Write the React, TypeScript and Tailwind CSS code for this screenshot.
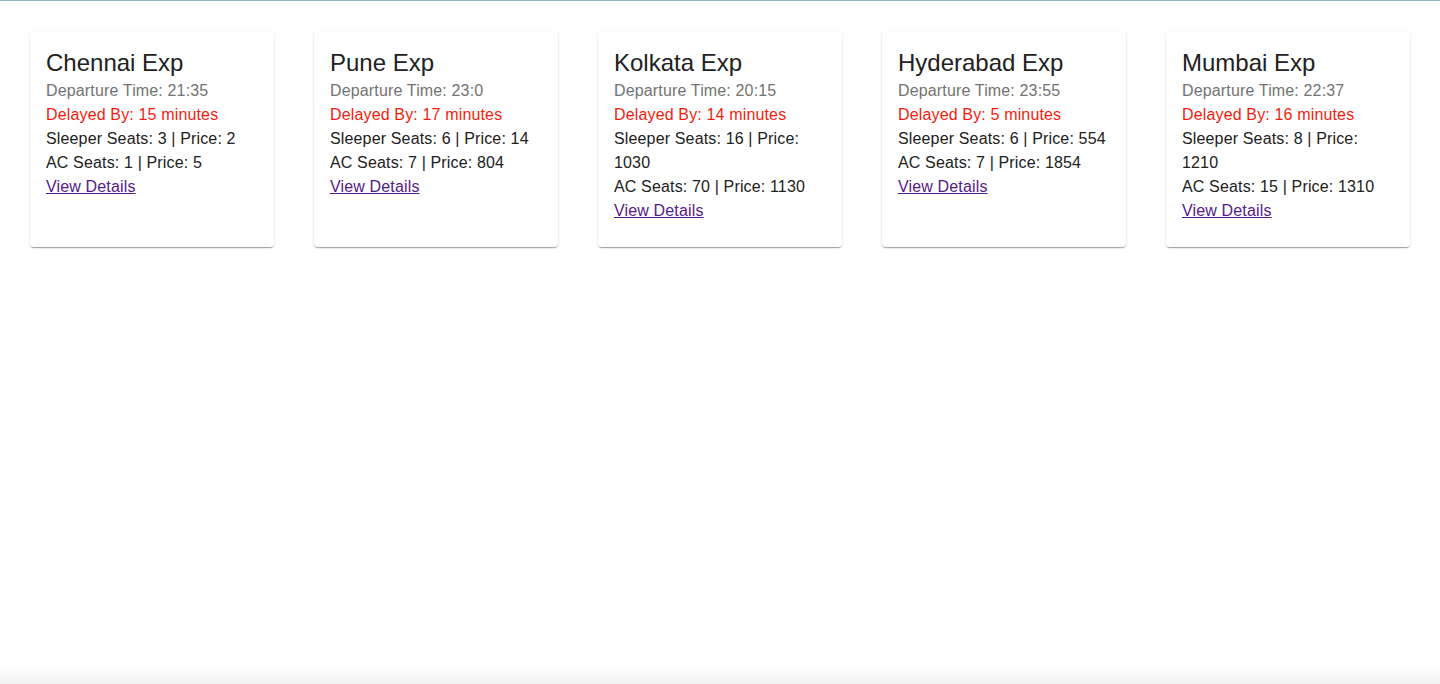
import React from "react";

type Train = {
  name: string;
  dep: string;
  delay: number;
  sleeperSeats: number;
  sleeperPrice: number;
  acSeats: number;
  acPrice: number;
};

const trains: Train[] = [
  { name: "Chennai Exp", dep: "21:35", delay: 15, sleeperSeats: 3, sleeperPrice: 2, acSeats: 1, acPrice: 5 },
  { name: "Pune Exp", dep: "23:0", delay: 17, sleeperSeats: 6, sleeperPrice: 14, acSeats: 7, acPrice: 804 },
  { name: "Kolkata Exp", dep: "20:15", delay: 14, sleeperSeats: 16, sleeperPrice: 1030, acSeats: 70, acPrice: 1130 },
  { name: "Hyderabad Exp", dep: "23:55", delay: 5, sleeperSeats: 6, sleeperPrice: 554, acSeats: 7, acPrice: 1854 },
  { name: "Mumbai Exp", dep: "22:37", delay: 16, sleeperSeats: 8, sleeperPrice: 1210, acSeats: 15, acPrice: 1310 },
];

function Card({ t }: { t: Train }) {
  return (
    <div className="bg-white rounded-[4px] shadow-[0px_2px_1px_-1px_rgba(0,0,0,0.2),0px_1px_1px_0px_rgba(0,0,0,0.14),0px_1px_3px_0px_rgba(0,0,0,0.12)]">
      <div className="px-4 pt-4 pb-6 text-[16px] leading-[24px] tracking-[0.15px]">
        <div className="text-[24px] leading-[32px] tracking-normal text-[#212121]">{t.name}</div>
        <div className="text-[#737373]">Departure Time: {t.dep}</div>
        <div className="text-[#f51d0e]">Delayed By: {t.delay} minutes</div>
        <div className="text-[#212121]">
          Sleeper Seats: {t.sleeperSeats} | Price: {t.sleeperPrice}
        </div>
        <div className="text-[#212121]">
          AC Seats: {t.acSeats} | Price: {t.acPrice}
        </div>
        <a href="#" className="text-[#551a8b] underline">
          View Details
        </a>
      </div>
    </div>
  );
}

export default function App() {
  return (
    <div
      className="min-h-[684px] bg-white border-t border-[#8db5bb] relative"
      style={{ fontFamily: '"Liberation Sans", Arial, sans-serif' }}
    >
      <div className="grid grid-cols-5 gap-10 px-[30px] pt-[30px] items-stretch">
        {trains.map((t) => (
          <Card key={t.name} t={t} />
        ))}
      </div>
      <div className="fixed left-0 right-0 bottom-0 h-[16px] bg-gradient-to-b from-[rgba(0,0,0,0)] to-[rgba(0,0,0,0.05)] pointer-events-none" />
    </div>
  );
}
